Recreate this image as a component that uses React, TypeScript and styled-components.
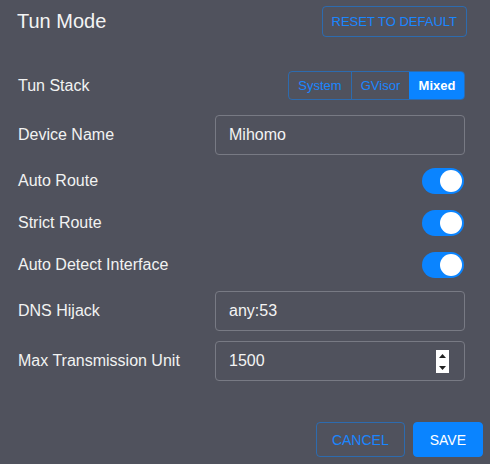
import React from 'react';
import styled, { createGlobalStyle } from 'styled-components';

const GlobalStyle = createGlobalStyle`
  html, body {
    margin: 0;
    padding: 0;
    background: #50525d;
  }
  * {
    box-sizing: border-box;
  }
`;

const Dialog = styled.div`
  width: 490px;
  height: 464px;
  background: #50525d;
  color: #f2f2f2;
  font-family: "Liberation Sans", Arial, sans-serif;
  display: flex;
  flex-direction: column;
`;

const Header = styled.div`
  display: flex;
  align-items: center;
  justify-content: space-between;
  padding: 6px 23px 0 17px;
  height: 37px;
`;

const Title = styled.div`
  font-size: 20px;
  color: #f4f4f4;
`;

const OutlineButton = styled.button`
  height: 31px;
  padding: 0 9px;
  background: transparent;
  border: 1px solid rgba(10, 132, 255, 0.5);
  border-radius: 4px;
  color: #1a86ff;
  font-family: "Liberation Sans", Arial, sans-serif;
  font-size: 13px;
`;

const List = styled.div`
  display: flex;
  flex-direction: column;
  padding: 27px 25px 0 18px;
  flex: 1;
`;

const Row = styled.div<{ $pad: string }>`
  display: flex;
  align-items: center;
  justify-content: space-between;
  padding: ${(p) => p.$pad};
`;

const Label = styled.div`
  font-size: 16px;
  color: #f2f2f2;
`;

const Segmented = styled.div`
  display: flex;
  height: 29px;
  border: 1px solid rgba(10, 132, 255, 0.5);
  border-radius: 4px;
  overflow: hidden;
`;

const Segment = styled.div<{ $active?: boolean; $w: number }>`
  width: ${(p) => p.$w}px;
  display: flex;
  align-items: center;
  justify-content: center;
  font-size: 13px;
  color: ${(p) => (p.$active ? '#ffffff' : '#1a86ff')};
  background: ${(p) => (p.$active ? '#0a84ff' : 'transparent')};
  font-weight: ${(p) => (p.$active ? 700 : 400)};
  & + & {
    border-left: 1px solid rgba(10, 132, 255, 0.5);
  }
`;

const Field = styled.div`
  width: 250px;
  height: 40px;
  border: 1px solid #787a84;
  border-radius: 4px;
  display: flex;
  align-items: center;
  padding: 0 15px 0 13px;
`;

const FieldInput = styled.input`
  flex: 1;
  min-width: 0;
  border: none;
  outline: none;
  background: transparent;
  color: #f4f4f4;
  font-family: "Liberation Sans", Arial, sans-serif;
  font-size: 16px;
  padding: 0;
`;

const Spinner = styled.div`
  width: 13px;
  height: 23px;
  background: #ffffff;
  display: flex;
  flex-direction: column;
  align-items: center;
  justify-content: space-between;
  padding: 4px 0 3px;
`;

const Track = styled.div<{ $on: boolean }>`
  width: 42px;
  height: 26px;
  border-radius: 13px;
  background: ${(p) => (p.$on ? '#0a84ff' : '#777a85')};
  display: flex;
  align-items: center;
  justify-content: ${(p) => (p.$on ? 'flex-end' : 'flex-start')};
  padding: 0 2px;
`;

const Knob = styled.div`
  width: 22px;
  height: 22px;
  border-radius: 50%;
  background: #ffffff;
`;

const Footer = styled.div`
  display: flex;
  justify-content: flex-end;
  gap: 8px;
  padding: 0 7px 7px 0;
`;

const ActionButton = styled.button<{ $primary?: boolean }>`
  height: 35px;
  padding: 0 ${(p) => (p.$primary ? '16px' : '15px')};
  border-radius: 4px;
  font-family: "Liberation Sans", Arial, sans-serif;
  font-size: 14px;
  border: 1px solid ${(p) => (p.$primary ? '#0a84ff' : 'rgba(10, 132, 255, 0.5)')};
  background: ${(p) => (p.$primary ? '#0a84ff' : 'transparent')};
  color: ${(p) => (p.$primary ? '#ffffff' : '#1a86ff')};
`;

const Switch = ({ on }: { on: boolean }) => (
  <Track $on={on}>
    <Knob />
  </Track>
);

const Arrow = ({ up }: { up?: boolean }) => (
  <svg width="7" height="4" viewBox="0 0 7 4">
    <path d={up ? 'M0 4 L3.5 0 L7 4 Z' : 'M0 0 L3.5 4 L7 0 Z'} fill="#222" />
  </svg>
);

const stacks = [
  { name: 'System', w: 62 },
  { name: 'GVisor', w: 58 },
  { name: 'Mixed', w: 55 },
];

export default function App() {
  return (
    <>
      <GlobalStyle />
      <Dialog>
        <Header>
          <Title>Tun Mode</Title>
          <OutlineButton>RESET TO DEFAULT</OutlineButton>
        </Header>
        <List>
          <Row $pad="7px 0 10px">
            <Label>Tun Stack</Label>
            <Segmented>
              {stacks.map((s) => (
                <Segment key={s.name} $w={s.w} $active={s.name === 'Mixed'}>
                  {s.name}
                </Segment>
              ))}
            </Segmented>
          </Row>
          <Row $pad="5px 0">
            <Label>Device Name</Label>
            <Field>
              <FieldInput defaultValue="Mihomo" />
            </Field>
          </Row>
          <Row $pad="8px 1px 8px 0">
            <Label>Auto Route</Label>
            <Switch on />
          </Row>
          <Row $pad="8px 1px 8px 0">
            <Label>Strict Route</Label>
            <Switch on />
          </Row>
          <Row $pad="8px 1px 8px 0">
            <Label>Auto Detect Interface</Label>
            <Switch on />
          </Row>
          <Row $pad="5px 0">
            <Label>DNS Hijack</Label>
            <Field>
              <FieldInput defaultValue="any:53" />
            </Field>
          </Row>
          <Row $pad="5px 0">
            <Label>Max Transmission Unit</Label>
            <Field>
              <FieldInput defaultValue="1500" />
              <Spinner>
                <Arrow up />
                <Arrow />
              </Spinner>
            </Field>
          </Row>
        </List>
        <Footer>
          <ActionButton>CANCEL</ActionButton>
          <ActionButton $primary>SAVE</ActionButton>
        </Footer>
      </Dialog>
    </>
  );
}
